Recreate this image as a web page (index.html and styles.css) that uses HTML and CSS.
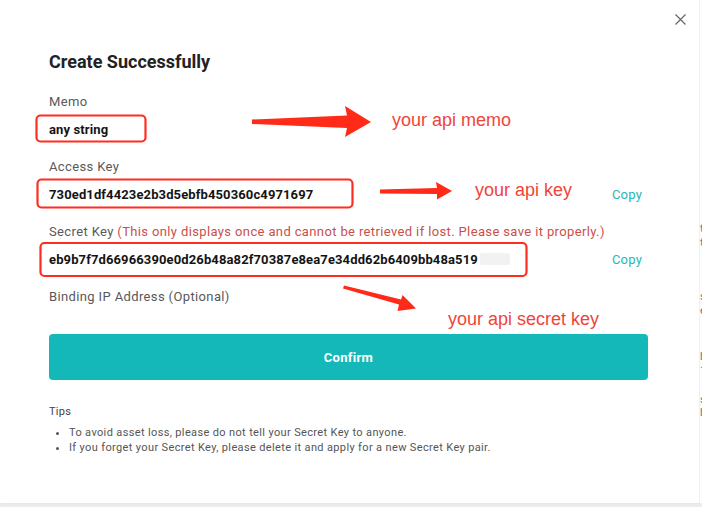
FILE: index.html
```html
<!DOCTYPE html>
<html>
<head>
<meta charset="utf-8">
<link rel="stylesheet" href="styles.css">
</head>
<body>
<div class="screen">
  <div class="modal">
    <button class="close" aria-label="close">
      <svg width="11" height="11" viewBox="0 0 11 11"><path d="M0.5 0.5L10.5 10.5M10.5 0.5L0.5 10.5" stroke="#666" stroke-width="1.2" fill="none"/></svg>
    </button>
    <h1 class="title">Create Successfully</h1>

    <div class="field">
      <div class="label">Memo</div>
      <div class="value-row"><span class="value">any string</span></div>
    </div>

    <div class="field">
      <div class="label">Access Key</div>
      <div class="value-row"><span class="value">730ed1df4423e2b3d5ebfb450360c4971697</span><span class="copy">Copy</span></div>
    </div>

    <div class="field">
      <div class="label">Secret Key <span class="warn">(This only displays once and cannot be retrieved if lost. Please save it properly.)</span></div>
      <div class="value-row"><span class="value">eb9b7f7d66966390e0d26b48a82f70387e8ea7e34dd62b6409bb48a519</span><span class="blur"></span><span class="copy">Copy</span></div>
    </div>

    <div class="field field-last">
      <div class="label">Binding IP Address (Optional)</div>
    </div>

    <button class="confirm">Confirm</button>

    <div class="tips">
      <div class="tips-title">Tips</div>
      <ul class="tips-list">
        <li>To avoid asset loss, please do not tell your Secret Key to anyone.</li>
        <li>If you forget your Secret Key, please delete it and apply for a new Secret Key pair.</li>
      </ul>
    </div>

    <svg class="marks" width="699" height="503" viewBox="0 0 699 503">
      <g fill="none" stroke="#ff2d1f" stroke-width="2.2">
        <rect x="36.5" y="115.5" width="109" height="26" rx="4"/>
        <rect x="37.5" y="179.5" width="315" height="28" rx="4"/>
        <rect x="40.5" y="243" width="486" height="33" rx="4"/>
      </g>
      <g fill="#ff2a17">
        <polygon points="252,119.5 347,115.5 345,106 371,122 345,137 347,128 252,124"/>
        <polygon points="380,189.5 437,188 436,182 452,191 437,199.5 437,194 380,193.5"/>
        <polygon points="344,285.5 401,299.5 402.5,295 416,308.5 397.5,311 399,304.5 343,288.5"/>
      </g>
    </svg>
    <span class="note note-memo">your api memo</span>
    <span class="note note-key">your api key</span>
    <span class="note note-secret">your api secret key</span>
  </div>
  <div class="side">
    <span class="frag f1">t</span>
    <span class="frag f2">t</span>
    <span class="frag f3">s</span>
    <span class="frag f4">e</span>
    <span class="frag f5">b</span>
    <span class="frag f6">1</span>
    <span class="frag f7">s</span>
    <span class="frag f8">b</span>
  </div>
</div>
<div class="bottom-strip"></div>
</body>
</html>
```
FILE: styles.css
```css
* { box-sizing: border-box; }
html, body { margin: 0; padding: 0; }
body {
  width: 702px;
  height: 507px;
  overflow: hidden;
  background: #fafafa;
  font-family: Roboto, "Liberation Sans", Arial, sans-serif;
}
.screen {
  display: flex;
  height: 503px;
}
.modal {
  position: relative;
  width: 699px;
  height: 503px;
  flex: none;
  background: #fff;
  padding: 50px 51px 0 49px;
  box-shadow: 1px 0 2px rgba(0,0,0,0.06);
}
.close {
  position: absolute;
  top: 14px;
  left: 675px;
  padding: 0;
  border: 0;
  background: none;
  width: 11px;
  height: 11px;
  display: block;
}
.close svg { display: block; }
.title {
  margin: 0 0 18px;
  font-size: 18px;
  line-height: 24px;
  font-weight: 700;
  color: #222;
}
.field { margin-bottom: 11px; }
.label {
  font-size: 13px;
  line-height: 20px;
  color: #595959;
  letter-spacing: 0.37px;
  white-space: nowrap;
}
.warn { color: #c9504a; }
.value-row {
  height: 34px;
  display: flex;
  align-items: center;
}
.value {
  font-size: 13px;
  font-weight: 700;
  color: #141414;
  letter-spacing: 0.12px;
}
.blur {
  width: 30px;
  height: 12px;
  margin-left: 2px;
  background: #f2f2f2;
  border-radius: 2px;
}
.copy {
  margin-left: auto;
  margin-right: 6px;
  font-size: 13px;
  color: #26b7b9;
  letter-spacing: 0.2px;
}
.field-last { margin-bottom: 27px; }
.confirm {
  display: block;
  width: 599px;
  height: 46px;
  border: 0;
  border-radius: 4px;
  background: #14b8b8;
  color: #fff;
  font-family: Roboto, "Liberation Sans", Arial, sans-serif;
  font-size: 13px;
  font-weight: 700;
  letter-spacing: 0.3px;
  padding: 0;
}
.tips { margin-top: 22px; }
.tips-title {
  font-size: 11px;
  line-height: 20px;
  color: #444;
  letter-spacing: 0.3px;
}
.tips-list {
  margin: 3px 0 0;
  padding-left: 20px;
  font-size: 11px;
  line-height: 15px;
  color: #555;
  letter-spacing: 0.36px;
}
.marks {
  position: absolute;
  left: 0;
  top: 0;
  pointer-events: none;
}
.note {
  position: absolute;
  font-family: "Liberation Sans", Arial, sans-serif;
  font-size: 18px;
  line-height: 20px;
  color: #f0443a;
  white-space: nowrap;
}
.note-memo { left: 392px; top: 110px; }
.note-key { left: 475px; top: 180px; }
.note-secret { left: 448px; top: 309px; }
.side {
  position: relative;
  flex: 1;
  background: #fff;
  overflow: hidden;
  border-left: 1px solid #f0f0f0;
}
.frag {
  position: absolute;
  left: 0;
  font-size: 11px;
  line-height: 12px;
  color: #777;
}
.f1 { top: 223px; }
.f2 { top: 237px; }
.f3 { top: 291px; }
.f4 { top: 305px; }
.f5 { top: 351px; }
.f6 { top: 365px; }
.f7 { top: 394px; }
.f8 { top: 407px; }
.bottom-strip {
  height: 4px;
  background: #ececec;
}
```
